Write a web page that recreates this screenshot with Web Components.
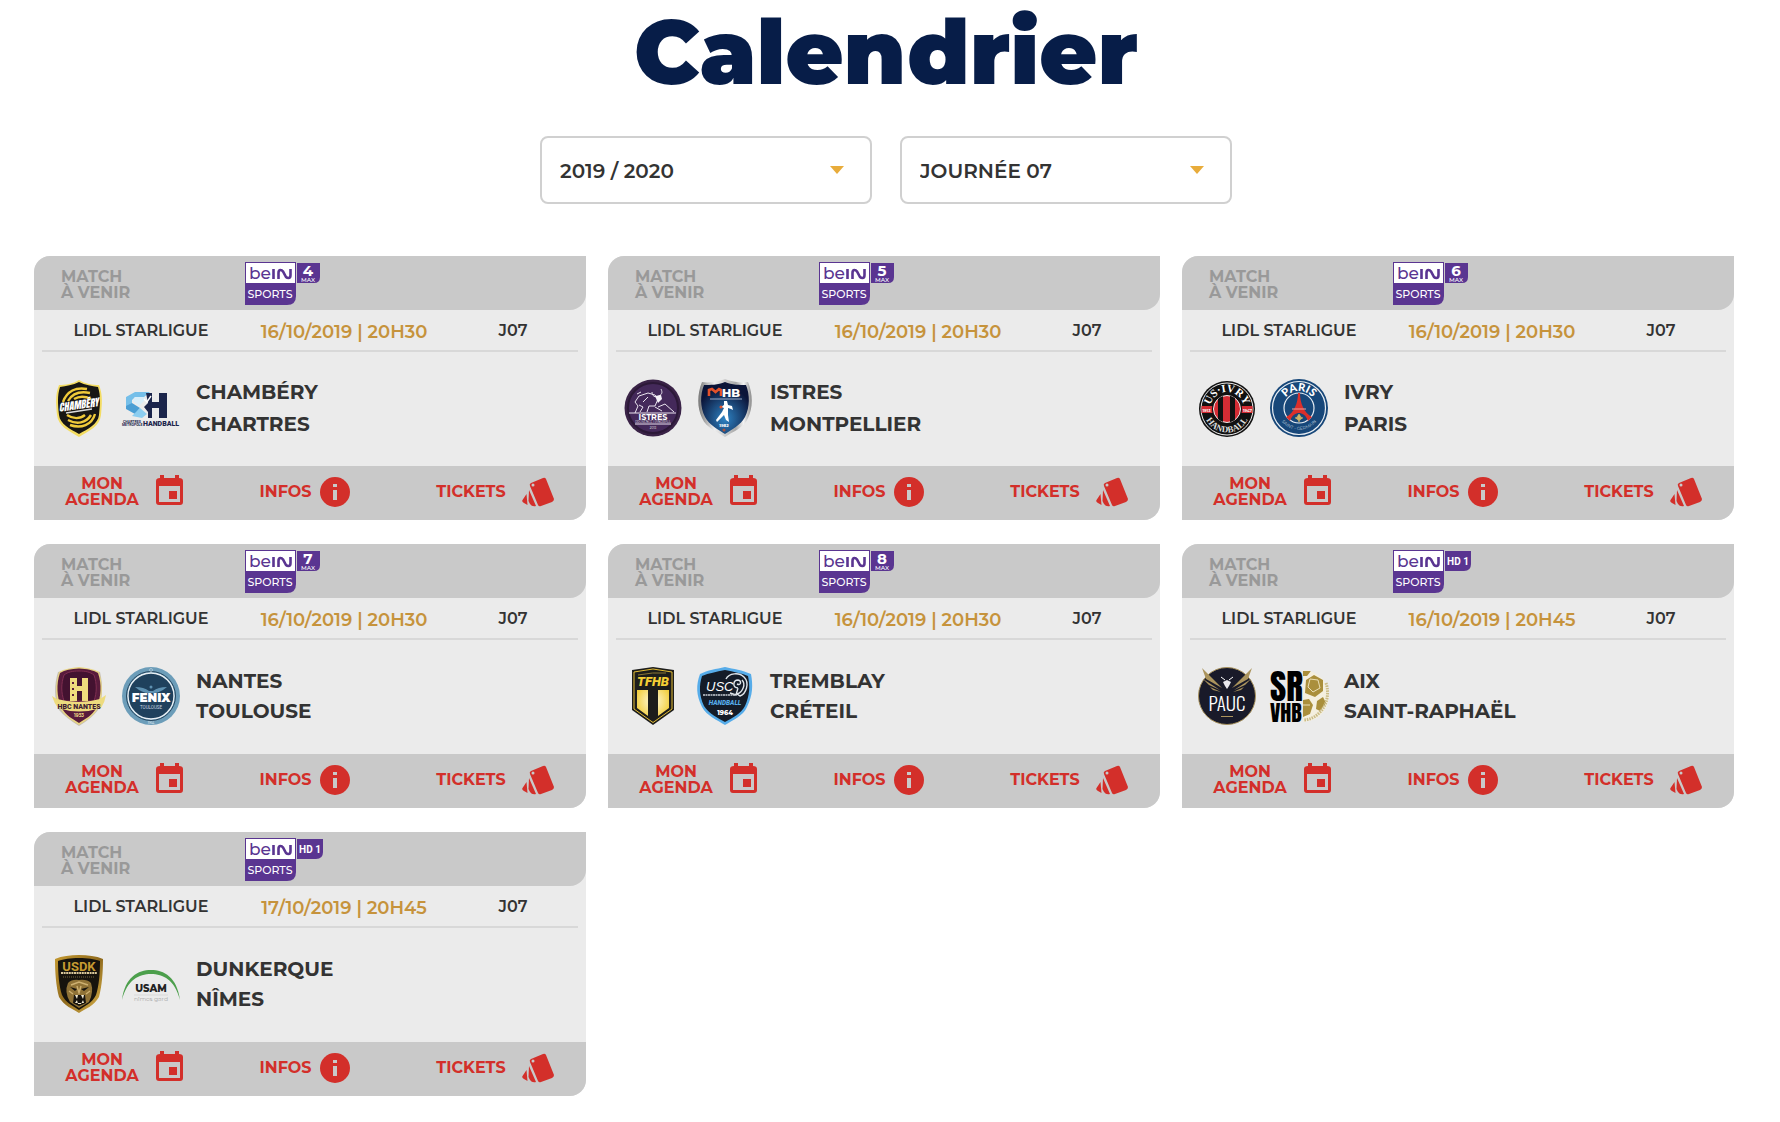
<!DOCTYPE html>
<html lang="fr">
<head>
<meta charset="utf-8">
<meta name="viewport" content="width=device-width, initial-scale=1">
<title>Calendrier</title>
<style>
    body{
        margin:0;
        background:#fff;
        color:#333;
        font-family:Montserrat, Inter, "Liberation Sans", sans-serif;
        font-size:16px;
    }
</style>
</head>
<body>
<calendar-page>
    <drop-down slot="filters" label="Saison" options="2019 / 2020,2018 / 2019"></drop-down>
    <drop-down slot="filters" label="Journée" options="JOURNÉE 07,JOURNÉE 08"></drop-down>
    <match-card channel="4" home="chambery" away="chartres" when="16/10/2019 | 20H30" spaced><span slot="home">CHAMBÉRY</span><span slot="away">CHARTRES</span></match-card>
    <match-card channel="5" home="istres" away="montpellier" when="16/10/2019 | 20H30" spaced><span slot="home">ISTRES</span><span slot="away">MONTPELLIER</span></match-card>
    <match-card channel="6" home="ivry" away="paris" when="16/10/2019 | 20H30" spaced><span slot="home">IVRY</span><span slot="away">PARIS</span></match-card>
    <match-card channel="7" home="nantes" away="toulouse" when="16/10/2019 | 20H30"><span slot="home">NANTES</span><span slot="away">TOULOUSE</span></match-card>
    <match-card channel="8" home="tremblay" away="creteil" when="16/10/2019 | 20H30"><span slot="home">TREMBLAY</span><span slot="away">CRÉTEIL</span></match-card>
    <match-card channel="HD 1" home="aix" away="raphael" when="16/10/2019 | 20H45"><span slot="home">AIX</span><span slot="away">SAINT-RAPHAËL</span></match-card>
    <match-card channel="HD 1" home="dunkerque" away="nimes" when="17/10/2019 | 20H45"><span slot="home">DUNKERQUE</span><span slot="away">NÎMES</span></match-card>
</calendar-page>

<script>
// club crests, all drawn in a 58 x 58 box
const crests={
    chambery:`
        <path d="M29 1 C23 5 15 6 9 6 C5 16 6 25 7 36 C8 47 19 52 29 58 C39 52 50 47 51 36 C52 25 53 16 49 6 C43 6 35 5 29 1Z" fill="#f3dc62"/>
        <path d="M29 3 C23 6 16 7 10 8 C7 17 8 26 9 36 C10 45 20 50 29 55 C38 50 48 45 49 36 C50 26 51 17 48 8 C42 7 35 6 29 3Z" fill="#171614"/>
        <g fill="none" stroke="#f0ca3a" stroke-width="2.4">
            <path d="M13 23 C17 12 26 8 37 10"/>
            <path d="M18 22 C22 15 30 12 40 14"/>
            <path d="M24 20 C29 17 35 17 41 20"/>
            <path d="M45 35 C42 46 31 50 20 46"/>
            <path d="M41 36 C36 44 27 46 18 41"/>
            <path d="M35 36 C30 40 23 40 17 36"/>
        </g>
        <text x="29" y="30" transform="rotate(-8 29 29)" font-size="10" font-family="Anton, Roboto" font-style="italic" fill="#fff" text-anchor="middle">CHAMBÉRY</text>
        <path d="M16 34 L42 30" stroke="#ddd" stroke-width="1.4"/>`,
    chartres:`
        <path d="M4 18 L13 13 H28 L22 18 H13 L10 21 V30 L4 27Z" fill="#75bfe9"/>
        <path d="M4 27 L10 24 L18 29 L13 35 L4 30Z" fill="#4a9ed4"/>
        <path d="M10 37 L18 29 L25 35 L20 39Z" fill="#8bcdf0"/>
        <path d="M13 18 H22 L24 20 L17 27 L11 22Z" fill="#d8eefa"/>
        <path d="M24 14 H30 V23 H37 V14 H45 V39 H37 V29 H30 V39 H26 V33 L22 28 L26 24Z" fill="#1b254b"/>
        <path d="M22 20 L25 23 L29 17" fill="none" stroke="#fff" stroke-width="1.4"/>
        <text x="39" y="47" font-size="7" font-family="Roboto" font-weight="900" fill="#1b254b" text-anchor="middle">HANDBALL</text>
        <text x="1" y="44" font-size="3.5" font-family="Roboto" font-weight="700" fill="#1b254b">CHARTRES</text>
        <text x="0" y="47" font-size="3.5" font-family="Roboto" font-weight="700" fill="#1b254b">MÉTROPOLE</text>`,
    istres:`
        <circle cx="29" cy="29" r="28.5" fill="#3a2347"/>
        <circle cx="29" cy="29" r="25" fill="#44295a" stroke="#2c1938" stroke-width="2"/>
        <g fill="none" stroke="#e9e3ee" stroke-width="1">
            <path d="M5 34 H52 M11 34 L14 27 L11 23 L15 17 L24 14 L31 16 L34 20 L31 27 L25 27 L23 33 M15 26 L19 28 L16 33 M34 28 L41 25 L50 33 M31 28 L38 32"/>
            <path d="M28 13 C28 17 31 19 35 17 C39 15 38 12 37 10 M13 15 L17 13 M24 18 L19 23"/>
            <path d="M11 45 H47"/>
        </g>
        <path d="M31 17 L37 16 L38 20 L34 24Z" fill="#f6f2f8"/>
        <text x="29" y="40.5" font-size="8" font-weight="700" fill="#fff" text-anchor="middle">ISTRES</text>
        <text x="29" y="44" font-size="3" fill="#eee" text-anchor="middle">PROVENCE HANDBALL</text>
        <text x="29" y="50" font-size="3" fill="#eee" text-anchor="middle">2013</text>`,
    montpellier:`
        <defs>
            <radialGradient id="m" cy=".7" r=".6"><stop offset="0" stop-color="#2e83c4"/><stop offset="1" stop-color="#0b1438"/></radialGradient>
            <linearGradient id="s"><stop offset="0" stop-color="#777"/><stop offset=".3" stop-color="#eee"/><stop offset=".7" stop-color="#aaa"/><stop offset=".85" stop-color="#f4f4f4"/><stop offset="1" stop-color="#888"/></linearGradient>
        </defs>
        <path d="M29 0 C22 3 12 4 6 3 C1 15 1 29 6 39 C10 49 22 53 29 58 C36 53 48 49 52 39 C57 29 57 15 52 3 C46 4 36 3 29 0Z" fill="url(#s)"/>
        <path d="M29 3 C22 6 14 6 8 6 C4 16 4 28 9 38 C13 46 23 51 29 55 C35 51 45 46 49 38 C54 28 54 16 50 6 C44 6 36 6 29 3Z" fill="url(#m)"/>
        <path d="M13 17 V11 L16 10 L19.500 13 L23 10 L25 11 V17" fill="none" stroke="#e4512a" stroke-width="2.600"/>
        <text x="26" y="17.500" font-size="11.500" font-weight="800" fill="#fff">HB</text>
        <path d="M14 20 H46" stroke="#9aa9c8" stroke-width="1"/>
        <path d="M28 22 L31 22 L32 26 L36 27 L37 31 L35 30 L32 29 L32 36 L33 43 L30 41 L28 36 L21 43 L20 41 L26 33 L28 29 L25 28 L28 26Z" fill="#fff"/>
        <circle cx="25" cy="28" r="1.500" fill="#e4512a"/>
        <text x="28" y="48" font-size="4" font-weight="800" fill="#fff" text-anchor="middle">1982</text>
        <circle cx="28" cy="51" r="1.500" fill="#a8523c"/>`,
    ivry:`
        <defs>
            <clipPath id="c"><circle cx="29" cy="30" r="13.500"/></clipPath>
            <path id="t" d="M12 30 A17 17 0 0 1 46 30"/>
            <path id="b" d="M5.500 30 A23.500 23.500 0 0 0 52.500 30"/>
        </defs>
        <circle cx="29" cy="30" r="28" fill="#111"/>
        <circle cx="29" cy="30" r="26" fill="none" stroke="#eee" stroke-width="1"/>
        <path d="M3.500 27 H54.500 V34 H3.500Z" fill="#d42c34"/>
        <circle cx="29" cy="30" r="15" fill="#111"/>
        <circle cx="29" cy="30" r="13.500" fill="#d42c34" stroke="#eee" stroke-width="1"/>
        <path clip-path="url(#c)" d="M20 15 H25 V45 H20Z M32 15 H37 V45 H32Z" fill="#111"/>
        <text font-family="Liberation Serif" font-size="11" font-weight="700" fill="#fff" text-anchor="middle"><textPath href="#t" startOffset="50%">US·IVRY</textPath></text>
        <text font-family="Liberation Serif" font-size="9" font-weight="700" fill="#ddd" text-anchor="middle"><textPath href="#b" startOffset="50%">HANDBALL</textPath></text>
        <text x="8.500" y="32.500" font-size="4" font-weight="700" fill="#fff" text-anchor="middle">1913</text>
        <text x="49.500" y="32.500" font-size="4" font-weight="700" fill="#fff" text-anchor="middle">1947</text>`,
    paris:`
        <defs>
            <path id="t" d="M12 29 A17 17 0 0 1 46 29"/>
            <path id="b" d="M7 29 A22 22 0 0 0 51 29"/>
        </defs>
        <circle cx="29" cy="29" r="29" fill="#174779"/>
        <circle cx="29" cy="29" r="26.500" fill="none" stroke="#e7edf3" stroke-width="1.200"/>
        <circle cx="29" cy="29" r="15" fill="#174779" stroke="#e7edf3" stroke-width="1.200"/>
        <path d="M28 14 H30 C30 24 34 34 42 38 L38 42 C36 36 32 34 29 34 C26 34 22 36 20 42 L16 38 C24 34 28 24 28 14Z" fill="#db2f2b"/>
        <path d="M22 30 H36" stroke="#e8a09c" stroke-width="1"/>
        <path d="M29 35 L31 38 L29 43 L27 38Z M25 39 Q27 37 28 41 M33 39 Q31 37 30 41" fill="#cfb568" stroke="#cfb568" stroke-width=".6"/>
        <text font-family="Lato" font-size="11" font-weight="900" fill="#fff" text-anchor="middle"><textPath href="#t" startOffset="50%">PARIS</textPath></text>
        <text font-size="4.500" fill="#b9cadb" text-anchor="middle"><textPath href="#b" startOffset="50%">SAINT - GERMAIN</textPath></text>`,
    nantes:`
        <path d="M29 1 L50 5 C53 18 53 32 48 43 Q42 51 29 59 Q16 51 9 43 C4 32 4 18 8 5Z" fill="#9d8f79" opacity=".5"/>
        <path d="M29 0 C21 1 14 2 9 5 C5 17 5 30 10 41 C15 50 23 54 29 58 C35 54 43 50 48 41 C53 30 53 17 49 5 C44 2 37 1 29 0Z" fill="#e8d584"/>
        <path d="M29 1.500 C21 2 15 3 10 6 C6 17 7 30 11 40 C16 49 23 52 29 56 C35 52 42 49 47 40 C51 30 52 17 48 6 C43 3 37 2 29 1.500Z" fill="#581b3c"/>
        <path d="M29 4 C22 4 18 5 14 8 C11 17 11 25 14 34 H44 C47 25 47 17 44 8 C40 5 36 4 29 4Z" fill="#431230" stroke="#7f2e50" stroke-width="1"/>
        <path d="M20 11 H27 V19 H32 V11 H38 V34 H32 V24 H27 V34 H20Z" fill="#efdb7d"/>
        <path d="M22 15 h2 v2 h-2z M22 21 h2 v2 h-2z M22 27 h2 v2 h-2z" fill="#581b3c"/>
        <path d="M2 29 L7 32 Q29 38 50 32 L56 28 Q55 35 51 41 Q29 48 8 41 Q4 36 2 29Z" fill="#eddb7e"/>
        <text x="29" y="42" font-size="7" font-family="Roboto" font-weight="900" fill="#3e2031" text-anchor="middle">HBC NANTES</text>
        <text x="29" y="49.500" font-size="4.500" font-weight="700" fill="#e8d584" text-anchor="middle">1953</text>`,
    toulouse:`
        <circle cx="29" cy="29" r="29" fill="#6c9db9"/>
        <circle cx="29" cy="29" r="23" fill="#1f415d" stroke="#e8eff4" stroke-width="1.400"/>
        <circle cx="29" cy="29" r="24.500" fill="none" stroke="#26465f" stroke-width="1"/>
        <path d="M13 20 Q22 20 27 24 H31 Q36 20 45 20 Q38 26 31 26 H27 Q20 26 13 20Z" fill="#5e91b1"/>
        <circle cx="29" cy="20" r="1.500" fill="#5e91b1"/>
        <text x="29" y="35" font-size="12" font-weight="900" fill="#fff" text-anchor="middle">FENIX</text>
        <text x="29" y="41.500" font-size="4.500" font-family="Roboto" fill="#c7d6e0" text-anchor="middle">TOULOUSE</text>
        <text x="29" y="57" font-size="3" fill="#fff" text-anchor="middle">1964</text>
        <circle cx="29" cy="3" r="1.500" fill="none" stroke="#c7d6e0" stroke-width=".6"/>`,
    tremblay:`
        <defs><radialGradient id="g" gradientUnits="userSpaceOnUse" cx="29" cy="34" r="20"><stop offset="0" stop-color="#fffbe0"/><stop offset="1" stop-color="#f0c92c"/></radialGradient></defs>
        <path d="M29 0 L50 3 V43 L29 58 L8 43 V3Z" fill="#1d1d1b"/>
        <path d="M29 2 L48 5 V42 L29 55.500 L10 42 V5Z" fill="#1d1d1b" stroke="#e4bd35" stroke-width="1"/>
        <path d="M13 23 H24 V49 L13 41Z M34 23 H45 V41 L34 49Z" fill="url(#g)"/>
        <text x="29" y="19" font-size="13" font-weight="900" font-style="italic" font-family="Roboto" fill="#f5cf35" text-anchor="middle">TFHB</text>
        <path d="M14 8 Q29 5 42 6" fill="none" stroke="#8a7634" stroke-width="1"/>`,
    creteil:`
        <path d="M29 0 C20 2 12 3 4 7 C0 18 0 28 6 40 C11 49 21 53 29 58 C37 53 47 49 51 40 C57 28 57 18 55 7 C46 3 38 2 29 0Z" fill="#56ace9"/>
        <path d="M29 3 C20 5 13 6 6 9 C3 19 3 28 8 39 C13 47 22 51 29 55 C36 51 45 47 49 39 C54 28 54 19 52 9 C45 6 38 5 29 3Z" fill="#141c28"/>
        <text x="10" y="24" font-size="13" font-family="Liberation Sans" font-style="italic" fill="#fff">USC</text>
        <g fill="none" stroke="#dfe5ea" stroke-width="1.400">
            <path d="M30 12 C33 6 43 5 48 10 C54 16 50 27 44 29 L41 27 C47 25 50 17 46 13"/>
            <path d="M42 21 C36 21 37 13 42 13 C46 14 45 19 41 17 M42 21 L40 28 L34 26"/>
        </g>
        <path d="M7 28 H39" stroke="#c7cdd3" stroke-width="1.400" stroke-dasharray="2 .500"/>
        <text x="29" y="38" font-size="6.500" font-family="Roboto" font-weight="900" font-style="italic" fill="#56ace9" text-anchor="middle">HANDBALL</text>
        <text x="29" y="47.500" font-size="6.500" font-weight="800" fill="#fff" text-anchor="middle">1964</text>`,
    aix:`
        <circle cx="29" cy="29" r="28.500" fill="#191a29" stroke="#a8925e" stroke-width="1"/>
        <g fill="#ab945d">
            <path d="M4 1 L24 21 L8 12Z M5 12 L22 23 L11 18Z M12 20 L23 25 L15 23Z"/>
            <path d="M54 1 L34 21 L50 12Z M53 12 L36 23 L47 18Z M46 20 L35 25 L43 23Z"/>
            <path d="M23 49 H35 V50 H23Z"/>
        </g>
        <path d="M25 15 L29 13 L33 15 L31 19 L29 22 L27 19Z" fill="#e9e9ee"/>
        <path d="M23 10 L27 13 M35 10 L31 13" stroke="#fff" stroke-width="1"/>
        <text x="29" y="44" font-size="19" font-family="Oswald, Liberation Sans Narrow, Roboto Condensed" font-weight="300" fill="#fff" text-anchor="middle">PAUC</text>`,
    raphael:`
        <text x="0" y="34" font-size="35" font-family="Anton, Oswald, Roboto" fill="#000">SR</text>
        <text x="0" y="55" font-size="22" font-family="Anton, Oswald, Roboto" fill="#000">VHB</text>
        <defs><clipPath id="c"><path d="M33 3 A26 26 0 0 1 33 55Z"/></clipPath></defs>
        <g clip-path="url(#c)">
            <path d="M33 3 A26 26 0 0 1 33 55Z" fill="#f4efdf"/>
            <path d="M36 13 L44 8 L53 13 V24 L45 30 L35 26Z M33 4 L41 4 L37 9 L33 9Z M33 33 L39 32 L43 38 L40 47 L33 50Z M47 34 L53 30 L56 36 L50 44 L46 42Z" fill="#aa8f3c"/>
            <path d="M40 12 L48 13 L50 21 L43 25 L38 20Z M33 38 L40 38" fill="none" stroke="#eadfb6" stroke-width="1"/>
        </g>
        <path d="M56 16 C62 34 50 52 34 53" fill="none" stroke="#c9ba85" stroke-width="3" stroke-dasharray="1.500 1"/>`,
    dunkerque:`
        <defs><linearGradient id="g" x2="1" y2="1"><stop offset="0" stop-color="#c59a31"/><stop offset=".5" stop-color="#8f6a1d"/><stop offset="1" stop-color="#dcb54c"/></linearGradient></defs>
        <path d="M29 0 C20 0 12 1 5 4 C5 17 6 31 9 42 C14 51 23 54 29 58 C35 54 44 51 49 42 C52 31 53 17 53 4 C46 1 38 0 29 0Z" fill="url(#g)"/>
        <path d="M29 3 C20 3 14 4 8 6 C8 18 9 31 12 40 C16 48 23 51 29 55 C35 51 42 48 46 40 C49 31 50 18 50 6 C44 4 38 3 29 3Z" fill="#16130d"/>
        <text x="29" y="16" font-size="13" font-family="Roboto" font-weight="700" fill="#c59a31" text-anchor="middle">USDK</text>
        <path d="M11 18 H47" stroke="#d9c79a" stroke-width="2" stroke-dasharray="2 .600"/>
        <path d="M13 22 H45" stroke="#756743" stroke-width="1" stroke-dasharray="1 1"/>
        <path d="M18 28 Q22 24 29 25 Q37 24 41 28 Q44 37 39 47 L29 53 L20 47 Q14 37 18 28Z" fill="#8f7236"/>
        <path d="M21 30 L29 27 L38 30 M19 36 L23 39 M40 36 L36 39 M27 31 L29 38 L31 31" fill="none" stroke="#cdb071" stroke-width="1.400"/>
        <path d="M20 32 L27 34 L25 36Z M39 32 L31 34 L34 36Z M24 40 H35 L36 48 L29 51 L23 48Z" fill="#16130d"/>
        <path d="M25 40 L27 44 L28 40Z M31 40 L33 44 L34 40Z M25 48 L27 45 L28 49 L31 49 L33 45 L34 48Z" fill="#f2ead2"/>`,
    nimes:`
        <path d="M0 45 C3 22 16 15 29 15 C42 15 55 22 58 45 C53 25 41 19 29 19 C17 19 5 25 0 45Z" fill="#4c9f4c"/>
        <text x="29" y="37" font-size="10" font-weight="800" fill="#222" text-anchor="middle">USAM</text>
        <path d="M12 40 H46" stroke="#cfcfcf" stroke-width=".6"/>
        <text x="29" y="46" font-size="6" font-weight="300" fill="#888" text-anchor="middle">nîmes gard</text>`
}

class ClubCrest extends HTMLElement{
    constructor(){
        super()
        this._shadowRoot = this.attachShadow({mode:'open'})
    }
    connectedCallback(){
        this._shadowRoot.innerHTML=`
        <style>
            :host{
                display:block;
                width:58px;
                height:58px;
            }
            svg{
                display:block;
                overflow:visible;
            }
        </style>
        <svg width="58" height="58" viewBox="0 0 58 58" aria-hidden="true">${crests[this.getAttribute('club')]}</svg>
        `
    }
}

class BeinLogo extends HTMLElement{
    constructor(){
        super()
        this._shadowRoot = this.attachShadow({mode:'open'})
    }
    connectedCallback(){
        const channel=this.getAttribute('channel')
        const tag=channel.startsWith('HD')
            ? `<path d="M52 1 H78 V14 Q78 21 71 21 H52Z" fill="#5a3591"/>
               <text x="65" y="15" font-size="10" font-family="Roboto" font-weight="700" text-anchor="middle">${channel}</text>`
            : `<path d="M52 1 H75 V15 Q75 21 69 21 H52Z" fill="#5a3591"/>
               <text x="63" y="14" font-size="15" font-weight="700" text-anchor="middle">${channel}</text>
               <text x="63" y="20" font-size="6" font-weight="500" text-anchor="middle">MAX</text>`
        this._shadowRoot.innerHTML=`
        <style>
            :host{
                display:block;
            }
            svg{
                display:block;
                overflow:visible;
                fill:#fff;
            }
        </style>
        <svg width="80" height="43" viewBox="0 0 80 43">
            <path d="M0 0 H51 V34 Q51 43 42 43 H0Z" fill="#5a3591"/>
            <path d="M1 1 H50 V21 H1Z"/>
            <text x="4" y="17" font-size="17" font-weight="500" fill="#5a3591">be</text>
            <path d="M28.500 7 V17 M33.500 17 V11 Q33.500 8 35.500 8 Q37 8 38 9.500 L41 15 Q42 16 43.500 16 Q45.500 16 45.500 13 V7" fill="none" stroke="#5a3591" stroke-width="2.600"/>
            <text x="25" y="36" font-size="11" font-weight="500" text-anchor="middle">SPORTS</text>
            ${tag}
        </svg>
        `
    }
}

class DropDown extends HTMLElement{
    constructor(){
        super()
        this._shadowRoot = this.attachShadow({mode:'open'})
    }
    connectedCallback(){
        const options=this.getAttribute('options').split(',')
        this._shadowRoot.innerHTML=`
        <style>
            :host{
                display:grid;
                width:332px;
                align-items:center;
            }
            select, svg{
                grid-area:1 / 1;
            }
            select{
                appearance:none;
                width:100%;
                height:68px;
                box-sizing:border-box;
                padding:2px 18px 0;
                border:2px solid #d0d0d0;
                border-radius:8px;
                background:#fff;
                color:#333;
                font:inherit;
                font-size:20px;
                font-weight:600;
            }
            svg{
                justify-self:end;
                margin-right:27px;
                pointer-events:none;
            }
        </style>
        <select aria-label="${this.getAttribute('label')}">
            ${options.map(o=>`<option>${o}</option>`).join('')}
        </select>
        <svg width="16" height="8" viewBox="0 0 16 8" aria-hidden="true"><path d="M1 0 H15 L8 8Z" fill="#e8ac3b"/></svg>
        `
    }
}

const icons={
    agenda:`<svg width="28" height="34" viewBox="0 0 28 34"><path fill-rule="evenodd" d="M4 0 H8 V3 H19 V0 H23 V3 Q27 3 27 6 V27 Q27 30 24 30 H3 Q0 30 0 27 V6 Q0 3 4 3Z M3 11 V27 H24 V11Z M13 16 H21 V24 H13Z"/></svg>`,
    infos:`<svg width="30" height="30" viewBox="0 0 30 30"><circle cx="15" cy="15" r="15"/><path d="M13 7 H17 V10 H13Z M13 13 H17 V23 H13Z" fill="#c9c9c9"/></svg>`,
    tickets:`<svg width="32" height="30" viewBox="0 0 32 30"><path fill-rule="evenodd" d="M9 6 L21 1 Q23 0 24 2 L32 22 Q32 24 30 25 L19 29 Q17 30 16 28 L8 9 Q7 7 9 6Z M9.500 8 a1.500 1.500 0 1 0 3 0 a1.500 1.500 0 1 0 -3 0Z"/><path d="M7 13 L14 29 Q10 30 8 27 L6.500 24Z M4.500 17 L5.500 28 L2 26 Q-.5 25 .5 23Z"/></svg>`
}

class CardAction extends HTMLElement{
    constructor(){
        super()
        this._shadowRoot = this.attachShadow({mode:'open'})
    }
    connectedCallback(){
        this._shadowRoot.innerHTML=`
        <style>
            :host{
                display:block;
            }
            a{
                display:flex;
                align-items:center;
                gap:var(--icon-gap, 8px);
                color:#d32f2a;
                font-size:16px;
                line-height:16px;
                font-weight:700;
                text-align:center;
                text-decoration:none;
            }
            span{
                width:var(--label-width, 53px);
            }
            svg{
                display:block;
                flex:none;
                fill:#d32f2a;
            }
        </style>
        <a href="#"><span><slot></slot></span>${icons[this.getAttribute('icon')]}</a>
        `
    }
}

class MatchCard extends HTMLElement{
    constructor(){
        super()
        this._shadowRoot = this.attachShadow({mode:'open'})
    }
    connectedCallback(){
        this._shadowRoot.innerHTML=`
        <style>
            :host{
                display:block;
                overflow:hidden;
                border-radius:16px 0 16px 0;
                background:#ebebeb;
            }
            .header{
                display:grid;
                grid-template-columns:184fr 341fr;
                align-items:center;
                height:54px;
                padding-left:27px;
                border-radius:0 0 16px 0;
                background:#c9c9c9;
            }
            .status{
                padding-top:4px;
                color:#999;
                font-size:16px;
                line-height:16px;
                font-weight:700;
            }
            .infos{
                display:grid;
                grid-template-columns:198fr 208fr 130fr;
                align-items:center;
                height:40px;
                margin:0 8px;
                border-bottom:2px solid #d8d8d8;
                font-weight:600;
                text-align:center;
            }
            time{
                padding-top:3px;
                color:#c6933c;
                font-size:18px;
            }
            .teams{
                display:flex;
                align-items:center;
                gap:14px;
                height:112px;
                padding:0 0 2px 16px;
            }
            .names{
                display:grid;
                padding-left:2px;
                font-size:20px;
                line-height:30px;
                font-weight:700;
            }
            :host([spaced]) .names{
                line-height:32px;
            }
            .actions{
                display:grid;
                grid-template-columns:195fr 176fr 151fr;
                align-items:center;
                height:52px;
                padding:0 0 2px 30px;
                background:#c9c9c9;
            }
            .agenda{
                --label-width:76px;
                --icon-gap:16px;
            }
            .tickets{
                --label-width:72px;
                --icon-gap:15px;
            }
        </style>
        <div class="header">
            <div class="status">MATCH<br>À VENIR</div>
            <bein-logo channel="${this.getAttribute('channel')}"></bein-logo>
        </div>
        <div class="infos">
            <span>LIDL STARLIGUE</span>
            <time>${this.getAttribute('when')}</time>
            <span>J07</span>
        </div>
        <div class="teams">
            <club-crest club="${this.getAttribute('home')}"></club-crest>
            <club-crest club="${this.getAttribute('away')}"></club-crest>
            <div class="names"><slot name="home"></slot><slot name="away"></slot></div>
        </div>
        <div class="actions">
            <card-action class="agenda" icon="agenda">MON<br>AGENDA</card-action>
            <card-action icon="infos">INFOS</card-action>
            <card-action class="tickets" icon="tickets">TICKETS</card-action>
        </div>
        `
    }
}

class CalendarPage extends HTMLElement{
    constructor(){
        super()
        this._shadowRoot = this.attachShadow({mode:'open'})
    }
    connectedCallback(){
        this._shadowRoot.innerHTML=`
        <style>
            :host{
                display:block;
                padding-bottom:24px;
            }
            header{
                padding-right:8px;
            }
            h1{
                margin:0;
                color:#071d48;
                font-size:89px;
                line-height:104px;
                font-weight:900;
                text-align:center;
            }
            .filters{
                display:flex;
                flex-wrap:wrap;
                justify-content:center;
                gap:28px;
                padding:32px 0 52px;
            }
            .grid{
                display:grid;
                grid-template-columns:repeat(3, 1fr);
                gap:24px 22px;
                padding:0 46px 0 34px;
            }
        </style>
        <header>
            <h1>Calendrier</h1>
            <div class="filters"><slot name="filters"></slot></div>
        </header>
        <main class="grid"><slot></slot></main>
        `
    }
}

window.customElements.define('club-crest',ClubCrest)
window.customElements.define('bein-logo',BeinLogo)
window.customElements.define('drop-down',DropDown)
window.customElements.define('card-action',CardAction)
window.customElements.define('match-card',MatchCard)
window.customElements.define('calendar-page',CalendarPage)
</script>
</body>
</html>
